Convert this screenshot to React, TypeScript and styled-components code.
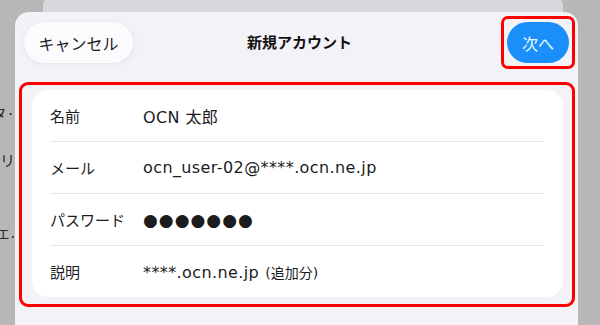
import styled, { createGlobalStyle } from "styled-components";

const GlobalStyle = createGlobalStyle`
  html, body {
    margin: 0;
    padding: 0;
    background: #b7b7b8;
  }
  body {
    font-family: "DejaVu Sans", "Noto Sans CJK JP", sans-serif;
    color: #1c1c1e;
  }
`;

type Row = { label: string; value: string; note?: string; secret?: boolean };

const rows: Row[] = [
  { label: "名前", value: "OCN 太郎" },
  { label: "メール", value: "ocn_user-02@****.ocn.ne.jp" },
  { label: "パスワード", value: "●●●●●●●", secret: true },
  { label: "説明", value: "****.ocn.ne.jp", note: "(追加分)" },
];

// bits of the list behind the sheet, only their last glyphs show
const peeks = [
  { text: "データ·", gap: 103 },
  { text: "カテゴリ", gap: 27 },
  { text: "プロフェ.", gap: 52 },
];

export default function App() {
  return (
    <>
      <GlobalStyle />
      <Screen>
        <Backdrop>
          {peeks.map((p) => (
            <Peek key={p.text} $gap={p.gap}>
              <span>{p.text}</span>
            </Peek>
          ))}
        </Backdrop>
        <Stack>
          <BehindSheet />
          <Sheet>
            <Header>
              <CancelButton>キャンセル</CancelButton>
              <Title>新規アカウント</Title>
              <Highlight $radius={7}>
                <NextButton>次へ</NextButton>
              </Highlight>
            </Header>
            <Highlight $radius={9} $pad="5px 9px 7px 10px">
              <Card>
                {rows.map((row, i) => (
                  <FieldRow key={row.label} $last={i === rows.length - 1}>
                    <Label>{row.label}</Label>
                    <Value $secret={row.secret}>
                      {row.value}
                      {row.note && <Note>{row.note}</Note>}
                    </Value>
                  </FieldRow>
                ))}
              </Card>
            </Highlight>
          </Sheet>
        </Stack>
      </Screen>
    </>
  );
}

const Screen = styled.div`
  display: flex;
  width: 600px;
  height: 325px;
  overflow: hidden;
`;

const Backdrop = styled.div`
  width: 15px;
  flex-shrink: 0;
  display: flex;
  flex-direction: column;
`;

const Peek = styled.div<{ $gap: number }>`
  display: flex;
  justify-content: flex-end;
  overflow: hidden;
  margin-top: ${(p) => p.$gap}px;
  font-size: 15px;
  line-height: 20px;
  color: #2a2a2c;
  white-space: nowrap;
  font-family: "Noto Sans CJK JP", sans-serif;
  & > span {
    flex-shrink: 0;
  }
`;

const Stack = styled.div`
  width: 563px;
  display: flex;
  flex-direction: column;
`;

const BehindSheet = styled.div`
  height: 16px;
  margin: -4px 15px 0 28px;
  background: #d8d8dc;
  border-radius: 10px 10px 0 0;
  flex-shrink: 0;
`;

const Sheet = styled.div`
  flex: 1;
  background: #f2f2f7;
  border-radius: 14px 14px 0 0;
  padding: 4px 3px 0 4px;
  display: flex;
  flex-direction: column;
  gap: 13px;
`;

const Header = styled.div`
  display: grid;
  grid-template-columns: 1fr auto 1fr;
  align-items: center;
  height: 53px;
  padding-left: 5px;
`;

const CancelButton = styled.button`
  justify-self: start;
  height: 41px;
  width: 109px;
  border: none;
  border-radius: 21px;
  background: #fbfbfd;
  box-shadow: 0 1px 6px rgba(0, 0, 0, 0.07);
  font-family: "Noto Sans CJK JP", sans-serif;
  font-size: 16px;
  color: #1c1c1e;
  padding: 0;
`;

const Title = styled.h1`
  margin: 0 0 2px 0;
  font-family: "Noto Sans CJK JP", sans-serif;
  font-size: 15px;
  font-weight: 700;
  color: #111;
`;

const Highlight = styled.div<{ $radius: number; $pad?: string }>`
  justify-self: end;
  border: 3px solid #ff0000;
  border-radius: ${(p) => p.$radius}px;
  padding: ${(p) => p.$pad ?? "3px"};
`;

const NextButton = styled.button`
  display: block;
  height: 41px;
  width: 62px;
  border: none;
  border-radius: 21px;
  background: #1a8ef9;
  color: #e9fbff;
  font-family: "Noto Sans CJK JP", sans-serif;
  font-size: 16px;
  padding: 0;
`;

const Card = styled.div`
  background: #ffffff;
  border-radius: 16px;
  padding-left: 18px;
`;

const FieldRow = styled.div<{ $last: boolean }>`
  display: flex;
  align-items: center;
  height: 51px;
  margin-right: 19px;
  border-bottom: ${(p) => (p.$last ? "none" : "1px solid #e6e6ea")};
`;

const Label = styled.div`
  width: 93px;
  flex-shrink: 0;
  font-family: "Noto Sans CJK JP", sans-serif;
  font-size: 15px;
  color: #1c1c1e;
`;

const Value = styled.div<{ $secret?: boolean }>`
  font-size: ${(p) => (p.$secret ? "17px" : "16px")};
  letter-spacing: ${(p) => (p.$secret ? "1px" : "0.4px")};
  color: #1c1c1e;
`;

const Note = styled.span`
  margin-left: 6px;
  font-family: "DejaVu Sans", "Noto Sans CJK JP", sans-serif;
  font-size: 14px;
  letter-spacing: 0;
`;
